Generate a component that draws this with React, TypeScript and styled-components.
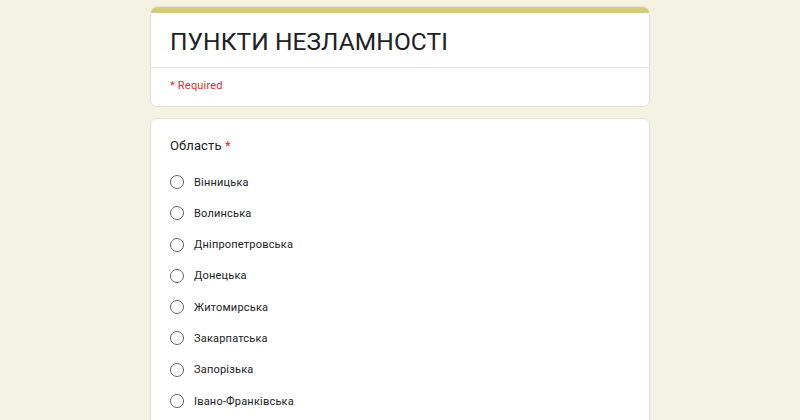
import React from 'react';
import styled, { createGlobalStyle } from 'styled-components';

const GlobalStyle = createGlobalStyle`
  html, body {
    margin: 0;
    padding: 0;
    background: #f4f2e3;
    font-family: Roboto, 'Noto Sans', Arial, sans-serif;
  }
`;

const Page = styled.div`
  width: 500px;
  margin: 6px auto 0;
  display: flex;
  flex-direction: column;
  gap: 11px;
`;

const Card = styled.div`
  background: #fff;
  border: 1px solid #e4e2d6;
  border-radius: 7px;
  overflow: hidden;
`;

const Accent = styled.div`
  height: 7px;
  background: #d3cc7a;
  margin: -1px -1px 0;
`;

const Title = styled.h1`
  margin: 0;
  padding: 14px 19px 10px;
  font-size: 24.5px;
  font-weight: 400;
  color: #202124;
  line-height: 30px;
  letter-spacing: 0.1px;
  border-bottom: 1px solid #e0e0e0;
`;

const Required = styled.div`
  padding: 11px 19px 14px;
  font-size: 11px;
  color: #d93025;
  letter-spacing: 0.2px;
`;

const Question = styled.div`
  padding: 19px 19px 40px;
`;

const Label = styled.div`
  font-size: 13px;
  color: #202124;
  letter-spacing: 0.1px;
  margin-bottom: 21px;
`;

const Star = styled.span`
  color: #d93025;
`;

const Options = styled.div`
  display: flex;
  flex-direction: column;
  gap: 15.3px;
`;

const Option = styled.label`
  display: flex;
  align-items: center;
  gap: 10px;
  font-size: 11px;
  color: #202124;
  letter-spacing: 0.2px;
  height: 16px;
`;

const Radio = styled.span`
  width: 12px;
  height: 12px;
  border: 1.6px solid #5f6368;
  border-radius: 50%;
  flex-shrink: 0;
`;

const regions = [
  'Вінницька',
  'Волинська',
  'Дніпропетровська',
  'Донецька',
  'Житомирська',
  'Закарпатська',
  'Запорізька',
  'Івано-Франківська',
];

export default function App() {
  return (
    <>
      <GlobalStyle />
      <Page>
        <Card>
          <Accent />
          <Title>ПУНКТИ НЕЗЛАМНОСТІ</Title>
          <Required>* Required</Required>
        </Card>
        <Card>
          <Question>
            <Label>
              Область <Star>*</Star>
            </Label>
            <Options>
              {regions.map((r) => (
                <Option key={r}>
                  <Radio />
                  {r}
                </Option>
              ))}
            </Options>
          </Question>
        </Card>
      </Page>
    </>
  );
}
